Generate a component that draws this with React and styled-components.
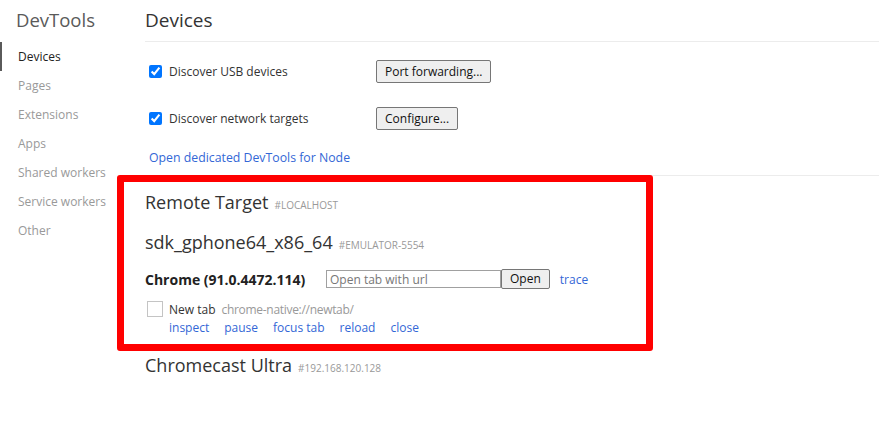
import React from "react";
import styled, { createGlobalStyle } from "styled-components";

const Global = createGlobalStyle`
  html, body { margin: 0; padding: 0; background: #fff; }
  body { font-family: "Open Sans", "Noto Sans", Arial, sans-serif; color: #333; }
`;

const Page = styled.div`
  position: relative;
  display: flex;
  width: 879px;
  height: 435px;
  overflow: hidden;
`;

const Sidebar = styled.nav`
  width: 145px;
  flex: none;
  display: flex;
  flex-direction: column;
`;

const Brand = styled.div`
  font-size: 18.5px;
  color: #5a5a5a;
  padding: 7px 0 0 16px;
  height: 42px;
  box-sizing: border-box;
`;

const NavItem = styled.div`
  height: 29px;
  display: flex;
  align-items: center;
  padding-left: ${p => (p.$active ? "16px" : "18px")};
  border-left: ${p => (p.$active ? "2px solid #5a5a5a" : "none")};
  font-size: 12px;
  color: ${p => (p.$active ? "#222" : "#999")};
  &:first-of-type { height: 30px; }
`;

const Main = styled.main`
  flex: 1;
  display: flex;
  flex-direction: column;
`;

const Title = styled.h1`
  margin: 0;
  font-weight: 400;
  font-size: 19px;
  color: #333;
  height: 42px;
  box-sizing: border-box;
  padding-top: 7px;
  border-bottom: 1px solid #ececec;
`;

const Options = styled.section`
  display: flex;
  flex-direction: column;
  padding: 18px 0 0 4px;
  border-bottom: 1px solid #ececec;
  height: 134px;
  box-sizing: border-box;
`;

const OptionRow = styled.div`
  display: flex;
  align-items: center;
  height: 23px;
  margin-bottom: 24px;
`;

const Label = styled.label`
  width: 227px;
  display: flex;
  align-items: center;
  gap: 7px;
  font-size: 12px;
  color: #333;
  input { margin: 0; width: 13px; height: 13px; }
`;

const Button = styled.button`
  font-family: inherit;
  font-size: 12px;
  color: #111;
  background: #efefef;
  border: 1px solid #767676;
  border-radius: 2px;
  height: ${p => (p.$small ? "20px" : "23px")};
  padding: 0 ${p => (p.$small ? "8px" : "8px")};
  box-sizing: border-box;
  line-height: 1;
`;

const Link = styled.a`
  color: #3367d6;
  font-size: 12px;
  text-decoration: none;
  cursor: pointer;
`;

const NodeLink = styled(Link)`
  margin-top: -5px;
  font-size: 12.3px;
`;

const Target = styled.section`
  display: flex;
  flex-direction: column;
`;

const Heading = styled.div`
  display: flex;
  align-items: baseline;
  gap: 6px;
  font-size: 18px;
  color: #333;
  height: ${p => p.$h || 40}px;
  padding-top: ${p => p.$pt || 0}px;
  box-sizing: border-box;
`;

const Tag = styled.span`
  font-size: 10px;
  color: #999;
  text-transform: uppercase;
`;

const BrowserRow = styled.div`
  display: flex;
  align-items: center;
  height: 22px;
`;

const BrowserName = styled.span`
  font-weight: 700;
  font-size: 14px;
  width: 181px;
  color: #222;
`;

const UrlInput = styled.input`
  width: 175px;
  height: 18px;
  box-sizing: border-box;
  border: 1px solid #a0a0a0;
  font-family: inherit;
  font-size: 12px;
  padding: 0 3px;
  margin: 0;
  &::placeholder { color: #777; }
`;

const TraceLink = styled(Link)`
  margin-left: 10px;
`;

const PageRow = styled.div`
  display: flex;
  gap: 6px;
  margin-top: 11px;
`;

const Box = styled.span`
  width: 14px;
  height: 14px;
  border: 1px solid #c4c4c4;
  margin-left: 2px;
  flex: none;
`;

const PageInfo = styled.div`
  display: flex;
  flex-direction: column;
  font-size: 12px;
  line-height: 18px;
`;

const PageTitle = styled.div`
  display: flex;
  gap: 6px;
  color: #333;
`;

const PageUrl = styled.span`
  color: #999;
  letter-spacing: -0.3px;
`;

const Actions = styled.div`
  display: flex;
  gap: 15px;
`;

const Highlight = styled.div`
  position: absolute;
  left: 117px;
  top: 175px;
  width: 536px;
  height: 176px;
  box-sizing: border-box;
  border: 7px solid #ff0000;
  border-radius: 3px;
  pointer-events: none;
`;

const nav = ["Devices", "Pages", "Extensions", "Apps", "Shared workers", "Service workers", "Other"];

export default function App() {
  return (
    <Page>
      <Global />
      <Sidebar>
        <Brand>DevTools</Brand>
        {nav.map((n, i) => (
          <NavItem key={n} $active={i === 0}>{n}</NavItem>
        ))}
      </Sidebar>
      <Main>
        <Title>Devices</Title>
        <Options>
          <OptionRow>
            <Label><input type="checkbox" defaultChecked />Discover USB devices</Label>
            <Button>Port forwarding...</Button>
          </OptionRow>
          <OptionRow>
            <Label><input type="checkbox" defaultChecked />Discover network targets</Label>
            <Button>Configure...</Button>
          </OptionRow>
          <NodeLink>Open dedicated DevTools for Node</NodeLink>
        </Options>
        <Target>
          <Heading $h={42} $pt={14}>Remote Target <Tag>#localhost</Tag></Heading>
          <Heading $h={50} $pt={12}>sdk_gphone64_x86_64 <Tag>#emulator-5554</Tag></Heading>
          <BrowserRow>
            <BrowserName>Chrome (91.0.4472.114)</BrowserName>
            <UrlInput placeholder="Open tab with url" />
            <Button $small>Open</Button>
            <TraceLink>trace</TraceLink>
          </BrowserRow>
          <PageRow>
            <Box />
            <PageInfo>
              <PageTitle>New tab <PageUrl>chrome-native://newtab/</PageUrl></PageTitle>
              <Actions>
                <Link>inspect</Link>
                <Link>pause</Link>
                <Link>focus tab</Link>
                <Link>reload</Link>
                <Link>close</Link>
              </Actions>
            </PageInfo>
          </PageRow>
          <Heading $h={40} $pt={16}>Chromecast Ultra <Tag>#192.168.120.128</Tag></Heading>
        </Target>
      </Main>
      <Highlight />
    </Page>
  );
}
